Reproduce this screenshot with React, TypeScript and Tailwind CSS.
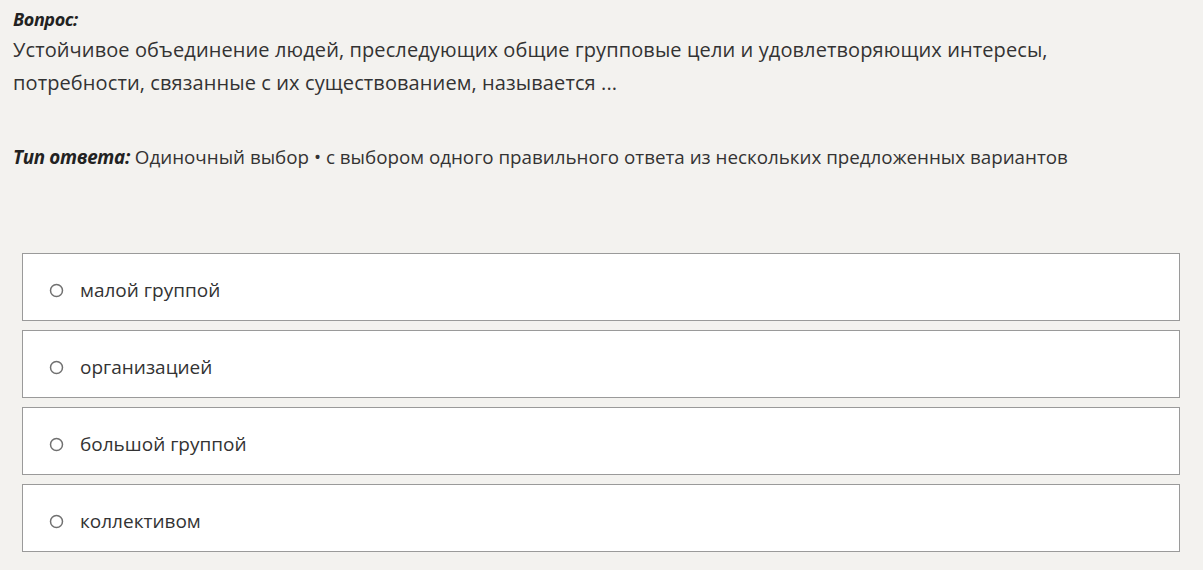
const options = ["малой группой", "организацией", "большой группой", "коллективом"];

function Radio() {
  return (
    <svg width="15" height="15" viewBox="0 0 15 15" className="shrink-0">
      <circle cx="7.5" cy="7.5" r="6" fill="#fff" stroke="#707070" strokeWidth="1.5" />
    </svg>
  );
}

export default function App() {
  return (
    <div
      className="w-[1203px] h-[570px] bg-[#f3f2ef] text-[#333] overflow-hidden"
      style={{ fontFamily: '"Open Sans", "Noto Sans", sans-serif' }}
    >
      <div className="pl-[13px] pt-[6px]">
        <div className="text-[18px] leading-[26px] font-bold italic text-[#222] tracking-[-0.4px]">Вопрос:</div>
        <p className="text-[20px] leading-[33px] w-[1100px] mt-[1px] tracking-[0.1px]">
          Устойчивое объединение людей, преследующих общие групповые цели и удовлетворяющих интересы,
          потребности, связанные с их существованием, называется ...
        </p>
        <p className="text-[18.8px] leading-[26px] mt-[45px]">
          <span className="font-bold italic text-[#222] tracking-[-0.3px]">Тип ответа:</span> Одиночный выбор • с выбором одного
          правильного ответа из нескольких предложенных вариантов
        </p>
      </div>
      <div className="flex flex-col gap-[9px] mt-[83px] ml-[22px] w-[1158px]">
        {options.map((o) => (
          <div
            key={o}
            className="h-[68px] bg-white border border-[#9a9a9a] flex items-center pl-[26px] pt-[7px]"
          >
            <Radio />
            <span className="ml-[16px] text-[19px] text-[#333]">{o}</span>
          </div>
        ))}
      </div>
    </div>
  );
}
